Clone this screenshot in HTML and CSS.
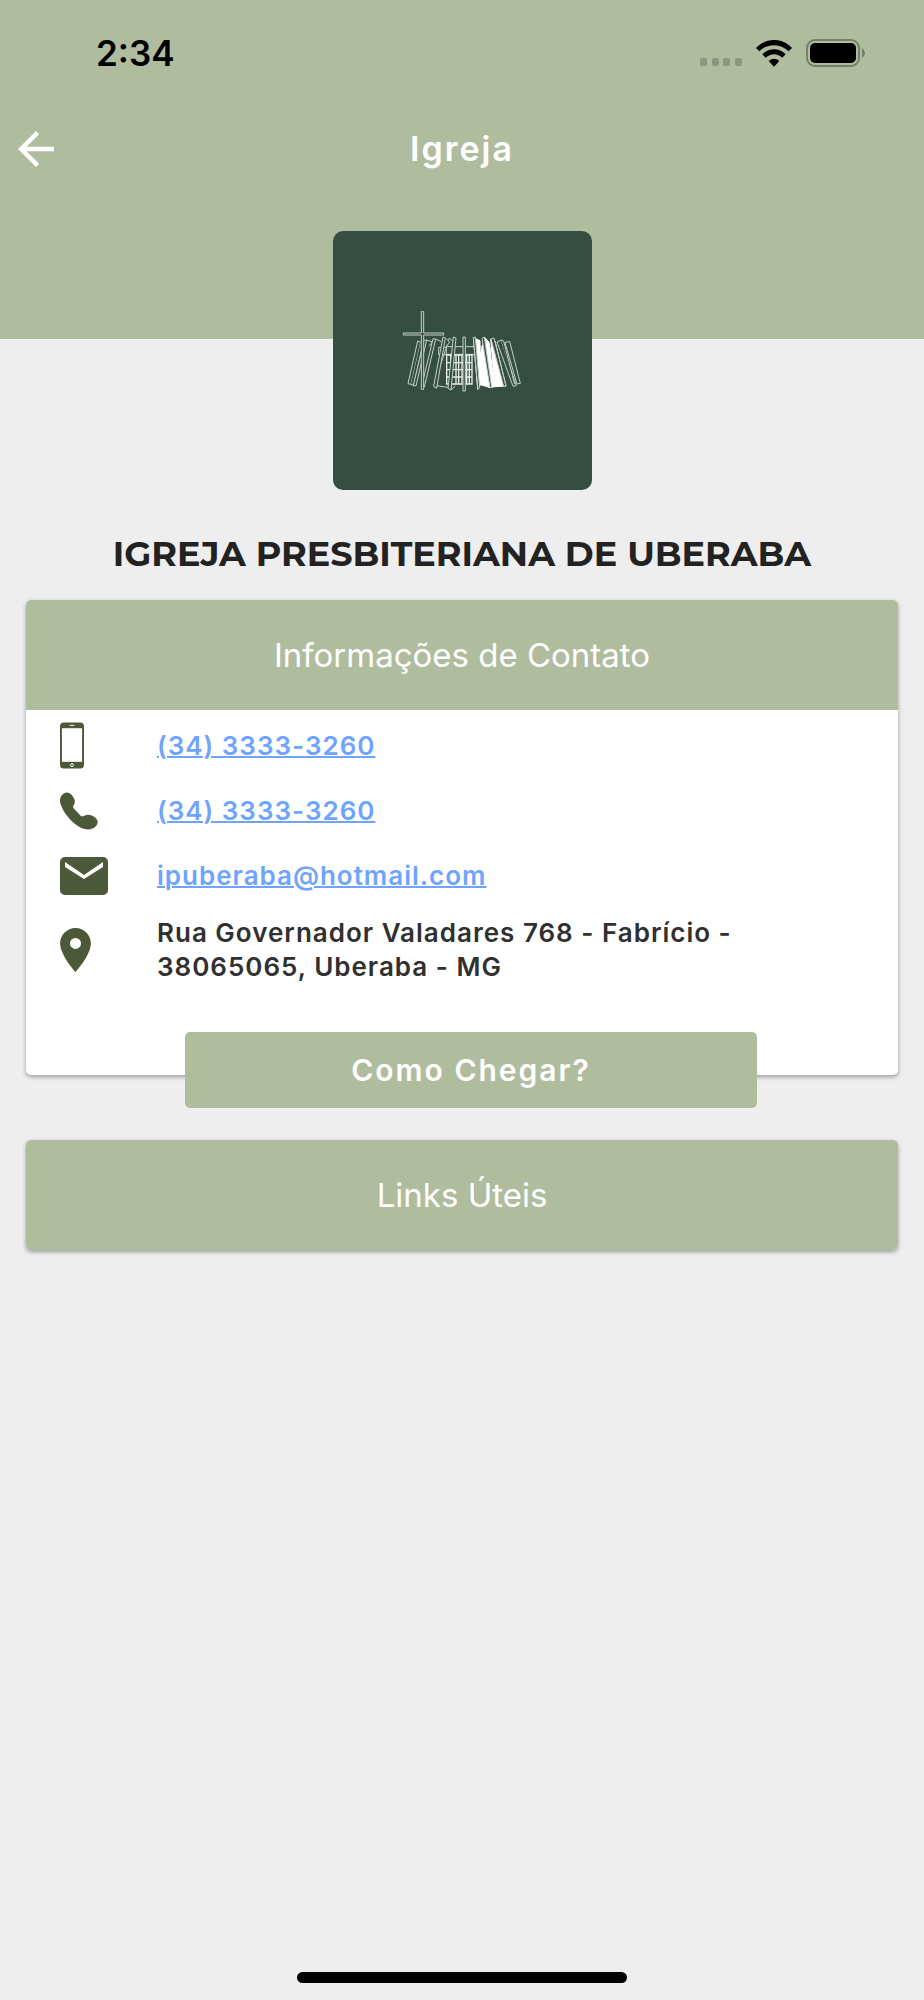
FILE: index.html
```html
<!DOCTYPE html>
<html lang="pt-BR">
<head>
    <meta charset="UTF-8">
    <meta name="viewport" content="width=device-width, initial-scale=1.0">
    <title>Igreja</title>
    <link rel="stylesheet" href="styles.css">
</head>
<body>
    <header class="header">
        <div class="status-bar">
            <span class="time">2:34</span>
            <div class="status-icons">
                <svg class="signal" width="42" height="8" viewBox="0 0 42 8" fill="#8c977d">
                    <rect width="7" height="8" rx="2"/>
                    <rect x="12" width="7" height="8" rx="2"/>
                    <rect x="23" width="7" height="8" rx="2"/>
                    <rect x="35" width="7" height="8" rx="2"/>
                </svg>
                <svg width="36" height="27" viewBox="0 0 108 81">
                    <path d="M0 24C30-8 78-8 108 24L98 34C74 10 34 10 10 34Z"/>
                    <path d="M19 43C39 23 69 23 89 43L79 53C64 39 44 39 29 53Z"/>
                    <path d="M38 63Q54 50 70 63L54 80Z"/>
                </svg>
                <svg width="59" height="28" viewBox="0 0 59 28">
                    <rect x="1" y="1" width="52" height="26" rx="8" fill="none" stroke="#73806a" stroke-width="2"/>
                    <rect x="4" y="4" width="46" height="20" rx="5"/>
                    <path d="M56 9Q59 11 59 14T56 19Z" fill="#73806a"/>
                </svg>
            </div>
        </div>
        <div class="app-bar">
            <button class="back" aria-label="Voltar">
                <svg width="36" height="36" viewBox="4 4 16 16" fill="#fff">
                    <path d="M20 11H7.83l5.59-5.59L12 4l-8 8 8 8 1.41-1.41L7.83 13H20v-2z"/>
                </svg>
            </button>
            <h1>Igreja</h1>
        </div>
    </header>

    <main>
        <div class="logo">
            <svg width="145" height="100" viewBox="0 31 435 300" fill="#344f42" stroke="#c3cec8" stroke-width="3">
                <path d="M146 140h155v22H146z"/>
                <path d="M169 138h108v23H169z"/>
                <!-- window grid -->
                <path d="M170 163h76v87h-76zM170 186h76M170 207h76M170 229h76M182 163v87M198 163v87M206 163v87M216 163v87M230 163v87M238 163v87" stroke="#e8eeea" stroke-width="4"/>
                <!-- left blades -->
                <path d="M83 121l9 4-29 126-9-2z"/>
                <path d="M63 251l8 4 30-134-9 4"/>
                <path d="M102 119l8-1-32 138-8-2z"/>
                <path d="M110 118l17 6-10 12"/>
                <path d="M129 114l8 2-34 143-8-2z"/>
                <path d="M137 115l17 8"/>
                <path d="M132 254l46-142 13 12-8 142-10-6z" fill="none"/>
                <path d="M159 109l7 3-26 151-9-6z"/>
                <path d="M166 112l13 12-7 10"/>
                <path d="M190 109l8 3-15 156-9-5z"/>
                <path d="M183 268l13-12"/>
                <!-- right blades -->
                <path d="M302 115l13 6 33 135-34 2z" fill="#fff" stroke="#fff"/>
                <path d="M283 109l14 16 17 133-14 3-28-9-3-80z" fill="#fff" stroke="#fff"/>
                <path d="M250 111l20 9 2 132-9 14z" fill="#fff" stroke="#fff"/>
                <path d="M250 111l6-2 13 151-5 6z"/>
                <path d="M276 113l7-4 22 151-5 1z"/>
                <path d="M303 115l9-3 36 144-7 1z"/>
                <path d="M321 124l12-6 46 137-10 2z"/>
                <path d="M333 118l8 3 33 130"/>
                <path d="M345 126l14-4 32 126-10 2z"/>
                <path d="M219 109h7v162h-7z"/>
                <!-- cross -->
                <path d="M94 31h7v66h60v6h-60v163h-7V103H40v-6h54z"/>
            </svg>
        </div>
        <h2 class="church-name">IGREJA PRESBITERIANA DE UBERABA</h2>

        <section class="card">
            <h3 class="card-title">Informações de Contato</h3>
            <ul class="contacts">
                <li>
                    <span class="icon">
                        <svg width="24" height="47" viewBox="0 0 25 48">
                            <rect width="25" height="48" rx="4" fill="#4b5938"/>
                            <path d="M2 6h21v35H2z" fill="#fff"/>
                            <path d="M10 3h5" stroke="#fff"/>
                            <circle cx="12.5" cy="44.500" r="1.500" fill="none" stroke="#fff"/>
                        </svg>
                    </span>
                    <a href="tel:+553433333260">(34) 3333-3260</a>
                </li>
                <li>
                    <span class="icon">
                        <svg width="38" height="38" viewBox="0 0 114 114" fill="#4b5938">
                            <path d="M10 5C20-2 30 2 36 10C44 21 48 29 41 40Q37 45 42 50L62 71Q66 75 73 71C84 65 96 69 106 77C114 84 116 93 108 102C98 114 80 115 64 108C36 94 10 64 1 34C-2 20 2 11 10 5Z"/>
                        </svg>
                    </span>
                    <a href="tel:+553433333260">(34) 3333-3260</a>
                </li>
                <li>
                    <span class="icon">
                        <svg width="48" height="38" viewBox="0 0 48 38">
                            <rect width="48" height="38" rx="5" fill="#4b5938"/>
                            <path d="M5 5l19 13L43 5v5L24 22 5 10z" fill="#fff"/>
                        </svg>
                    </span>
                    <a href="mailto:ipuberaba@hotmail.com">ipuberaba@hotmail.com</a>
                </li>
                <li class="address">
                    <span class="icon">
                        <svg width="31" height="44" viewBox="5 2 14 20" fill="#4b5938">
                            <path d="M12 2C8.130 2 5 5.130 5 9c0 5.250 7 13 7 13s7-7.750 7-13c0-3.870-3.130-7-7-7zm0 9.500a2.500 2.500 0 1 1 0-5 2.500 2.500 0 0 1 0 5z"/>
                        </svg>
                    </span>
                    <p>Rua Governador Valadares 768 - Fabrício - 38065065, Uberaba - MG</p>
                </li>
            </ul>
            <button class="directions">Como Chegar?</button>
        </section>

        <section class="card">
            <h3 class="card-title">Links Úteis</h3>
        </section>
    </main>

    <div class="home-indicator"></div>
</body>
</html>
```

FILE: styles.css
```css
* {
    box-sizing: border-box;
}
body {
    display: flex;
    flex-direction: column;
    min-height: 100vh;
    margin: 0;
    font-family: Inter, "Liberation Sans", sans-serif;
    background-color: #eeeeee;
}
h1, h2, h3, p, ul {
    margin: 0;
    padding: 0;
}
svg {
    display: block;
}
button {
    border: none;
    font-family: inherit;
    cursor: pointer;
}

/* Header */
.header {
    height: 339px;
    background-color: #b0bc9e;
}
.status-bar {
    display: flex;
    justify-content: space-between;
    align-items: center;
    height: 106px;
    padding: 0 59px 0 96px;
}
.time {
    font-size: 35px;
    font-weight: 600;
}
.status-icons {
    display: flex;
    align-items: center;
    gap: 14px;
}
.signal {
    margin-top: 18px;
}
.app-bar {
    display: grid;
    grid-template-columns: 72px 1fr 72px;
    align-items: center;
    height: 85px;
}
.back {
    padding: 0 18px;
    background: none;
}
.app-bar h1 {
    color: white;
    font-size: 34px;
    font-weight: 600;
    letter-spacing: 2px;
    text-align: center;
}

/* Content */
main {
    flex: 1;
    margin-top: -108px;
    padding: 0 26px;
}
.logo {
    display: flex;
    justify-content: center;
    align-items: center;
    width: 259px;
    height: 259px;
    margin: 0 auto;
    border-radius: 10px;
    background-color: #344f42;
}
.church-name {
    margin: 42px 0 24px;
    color: #222222;
    font-family: Montserrat, Inter, sans-serif;
    font-size: 35px;
    font-weight: 700;
    line-height: 44px;
    text-align: center;
}
.card {
    display: flow-root;
    margin-bottom: 65px;
    border-radius: 5px;
    background-color: white;
    box-shadow: 0 2px 4px rgba(0, 0, 0, 0.35);
}
.card-title {
    border-radius: 5px;
    background-color: #b0bc9e;
    color: white;
    font-size: 33px;
    font-weight: 400;
    line-height: 110px;
    text-align: center;
}
.card-title:not(:last-child) {
    border-radius: 5px 5px 0 0;
}

/* Contact list */
.contacts {
    padding: 3px 34px 0;
    color: #303030;
    font-size: 26px;
    font-weight: 600;
    letter-spacing: 1px;
    line-height: 34px;
    list-style: none;
}
.contacts li {
    display: flex;
    align-items: center;
    height: 65px;
}
.contacts li.address {
    height: auto;
    min-height: 84px;
}
.icon {
    flex: 0 0 97px;
}
.contacts a {
    color: #6ea4ff;
    text-decoration-thickness: 2px;
}
.address p {
    max-width: 600px;
}
.directions {
    display: block;
    width: calc(100% - 300px);
    height: 76px;
    margin: 40px 141px -33px 159px;
    border-radius: 5px;
    background-color: #b0bc9e;
    color: white;
    font-size: 30px;
    font-weight: 600;
    letter-spacing: 2px;
}

.home-indicator {
    width: 330px;
    height: 11px;
    margin: 0 auto 17px;
    border-radius: 6px;
    background-color: black;
}
```
